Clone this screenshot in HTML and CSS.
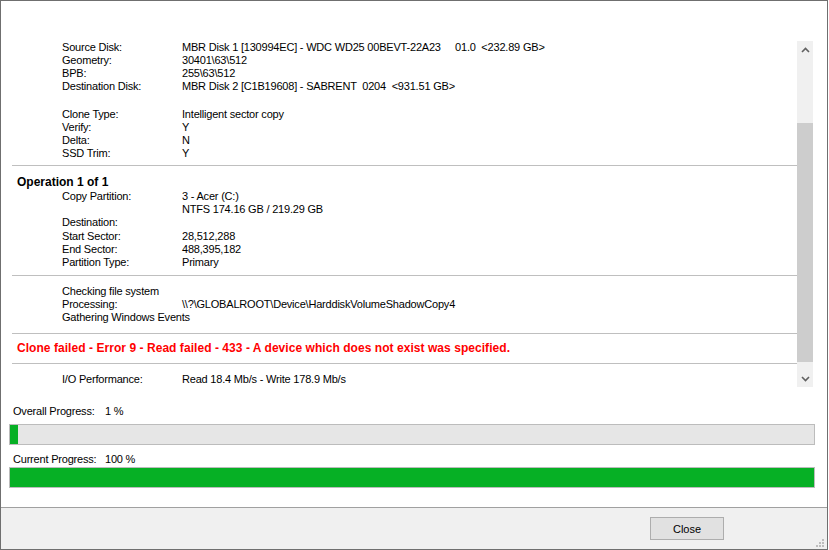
FILE: index.html
```html
<!DOCTYPE html>
<html lang="en">
<head>
    <meta charset="UTF-8">
    <title>Clone</title>
    <link rel="stylesheet" href="styles.css">
</head>
<body>

<div class="window">
    <div class="main">
        <div class="log">
            <div class="log-body">
                <div class="group">
                    <div class="row"><span class="label">Source Disk:</span><span class="value">MBR Disk 1 [130994EC] - WDC WD25 00BEVT-22A23     01.0  &lt;232.89 GB&gt;</span></div>
                    <div class="row"><span class="label">Geometry:</span><span class="value">30401\63\512</span></div>
                    <div class="row"><span class="label">BPB:</span><span class="value">255\63\512</span></div>
                    <div class="row"><span class="label">Destination Disk:</span><span class="value">MBR Disk 2 [C1B19608] - SABRENT  0204  &lt;931.51 GB&gt;</span></div>
                </div>
                <div class="group gap-top">
                    <div class="row"><span class="label">Clone Type:</span><span class="value">Intelligent sector copy</span></div>
                    <div class="row"><span class="label">Verify:</span><span class="value">Y</span></div>
                    <div class="row"><span class="label">Delta:</span><span class="value">N</span></div>
                    <div class="row"><span class="label">SSD Trim:</span><span class="value">Y</span></div>
                </div>
                <hr class="sep first">
                <div class="op-title">Operation 1 of 1</div>
                <div class="row"><span class="label">Copy Partition:</span><span class="value">3 - Acer (C:)</span></div>
                <div class="row"><span class="label"></span><span class="value">NTFS 174.16 GB / 219.29 GB</span></div>
                <div class="row"><span class="label">Destination:</span><span class="value"></span></div>
                <div class="row push"><span class="label">Start Sector:</span><span class="value">28,512,288</span></div>
                <div class="row"><span class="label">End Sector:</span><span class="value">488,395,182</span></div>
                <div class="row"><span class="label">Partition Type:</span><span class="value">Primary</span></div>
                <hr class="sep">
                <div class="row"><span class="label wide">Checking file system</span></div>
                <div class="row"><span class="label">Processing:</span><span class="value">\\?\GLOBALROOT\Device\HarddiskVolumeShadowCopy4</span></div>
                <div class="row"><span class="label wide">Gathering Windows Events</span></div>
                <hr class="sep before-error">
                <div class="error">Clone failed - Error 9 - Read failed - 433 - A device which does not exist was specified.</div>
                <hr class="sep tight">
                <div class="row"><span class="label">I/O Performance:</span><span class="value">Read 18.4 Mb/s - Write 178.9 Mb/s</span></div>
            </div>
            <div class="scrollbar">
                <div class="arrow">
                    <svg width="9" height="6" viewBox="0 0 9 6"><path d="M1 5 L4.5 1.5 L8 5" fill="none" stroke="#606060" stroke-width="1.6"/></svg>
                </div>
                <div class="track"><div class="thumb"></div></div>
                <div class="arrow">
                    <svg width="9" height="6" viewBox="0 0 9 6"><path d="M1 1 L4.5 4.5 L8 1" fill="none" stroke="#606060" stroke-width="1.6"/></svg>
                </div>
            </div>
        </div>

        <div class="progress">
            <div class="progress-label"><span class="plabel">Overall Progress:</span><span>1 %</span></div>
            <div class="bar"><div class="fill" style="width: 1%"></div></div>
            <div class="progress-label second"><span class="plabel">Current Progress:</span><span>100 %</span></div>
            <div class="bar"><div class="fill" style="width: 100%"></div></div>
        </div>
    </div>

    <div class="footer">
        <button class="close-btn">Close</button>
        <svg class="grip" width="8" height="8" viewBox="0 0 8 8">
            <rect x="6" y="0" width="2" height="2" fill="#bdbdbd"/>
            <rect x="3" y="3" width="2" height="2" fill="#bdbdbd"/>
            <rect x="6" y="3" width="2" height="2" fill="#bdbdbd"/>
            <rect x="0" y="6" width="2" height="2" fill="#bdbdbd"/>
            <rect x="3" y="6" width="2" height="2" fill="#bdbdbd"/>
            <rect x="6" y="6" width="2" height="2" fill="#bdbdbd"/>
        </svg>
    </div>
</div>

</body>
</html>
```

FILE: styles.css
```css
body {
    margin: 0;
    padding: 0;
    background-color: #ffffff;
    font-family: "Liberation Sans", Arial, sans-serif;
    font-size: 11px;
    letter-spacing: -0.2px;
    color: #000000;
}
.window {
    width: 826px;
    height: 548px;
    border: 1px solid #6f6f6f;
    display: flex;
    flex-direction: column;
    background-color: #ffffff;
}
.main {
    flex: 1;
    display: flex;
    flex-direction: column;
}
.log {
    display: flex;
    margin-top: 40px;
    margin-left: 11px;
    width: 801px;
    height: 346px;
}
.log-body {
    flex: 1;
    overflow: hidden;
}
.row {
    display: flex;
    height: 13px;
    line-height: 13px;
    white-space: pre;
}
.row.push {
    margin-top: 1px;
}
.label {
    width: 120px;
    padding-left: 50px;
    flex-shrink: 0;
}
.label.wide {
    width: auto;
}
.gap-top {
    margin-top: 15px;
}
.sep {
    border: none;
    border-top: 1px solid #bfbfbf;
    margin: 6px 0 9px 0;
    height: 0;
}
.sep.first {
    margin: 5px 0 0 0;
}
.sep.before-error {
    margin-top: 9px;
}
.sep.tight {
    margin-top: 0;
}
.op-title {
    font-weight: bold;
    font-size: 12px;
    letter-spacing: 0;
    line-height: 16px;
    margin-top: 8px;
    padding-left: 5px;
}
.error {
    color: #ff0000;
    font-weight: bold;
    font-size: 12px;
    letter-spacing: 0.05px;
    line-height: 29px;
    margin-top: -9px;
    padding-left: 5px;
    white-space: nowrap;
}
.scrollbar {
    width: 16px;
    background-color: #f0f0f0;
    display: flex;
    flex-direction: column;
}
.arrow {
    height: 17px;
    display: flex;
    align-items: center;
    justify-content: center;
}
.track {
    flex: 1;
    padding-top: 65px;
    padding-bottom: 8px;
    display: flex;
}
.thumb {
    flex: 1;
    background-color: #cdcdcd;
}
.progress {
    padding: 0 12px 0 8px;
    margin-top: 18px;
}
.progress-label {
    padding-left: 4px;
    line-height: 13px;
    height: 13px;
    margin-bottom: 6px;
}
.progress-label.second {
    margin-top: 8px;
    margin-bottom: 1px;
}
.plabel {
    display: inline-block;
    width: 92px;
}
.bar {
    height: 19px;
    border: 1px solid #bcbcbc;
    background-color: #e6e6e6;
}
.fill {
    height: 100%;
    background-color: #06b025;
}
.footer {
    height: 41px;
    border-top: 1px solid #a0a0a0;
    background-color: #f0f0f0;
    position: relative;
}
.close-btn {
    position: absolute;
    left: 649px;
    top: 9px;
    width: 74px;
    height: 23px;
    border: 1px solid #adadad;
    background-color: #e1e1e1;
    font-family: "Liberation Sans", Arial, sans-serif;
    font-size: 11px;
    color: #000000;
    padding: 0;
}
.grip {
    position: absolute;
    right: 3px;
    bottom: 2px;
}
```
